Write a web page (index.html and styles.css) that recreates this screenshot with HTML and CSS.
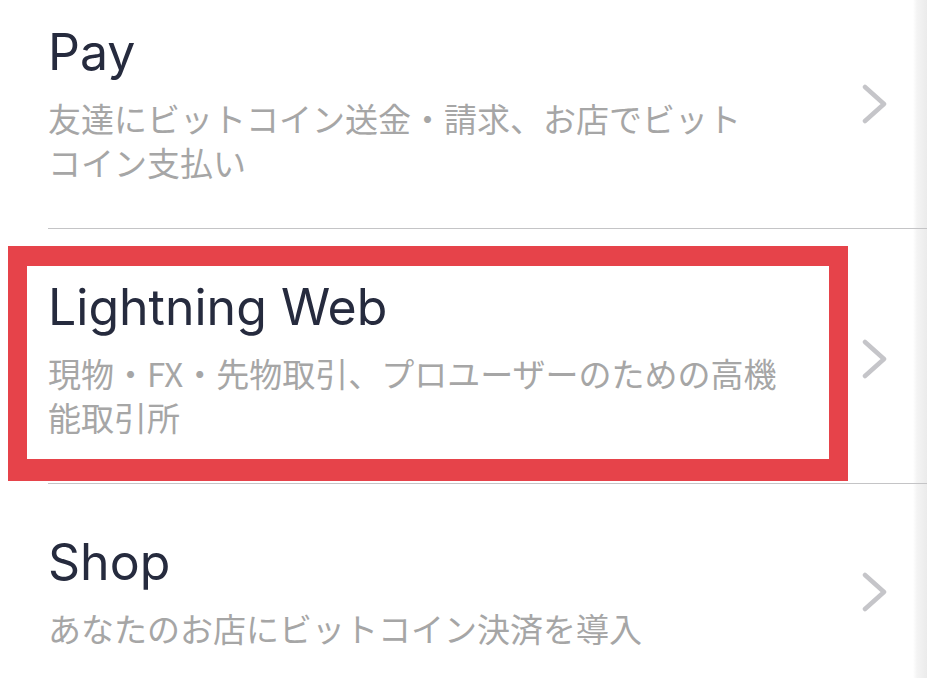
FILE: index.html
```html
<!DOCTYPE html>
<html lang="ja">
<head>
    <meta charset="utf-8">
    <title>bitFlyer サービス</title>
    <link rel="stylesheet" href="styles.css">
</head>
<body>
    <ul class="menu">
        <li class="menu-item">
            <div class="item-text">
                <div class="item-title">Pay</div>
                <div class="item-desc">友達にビットコイン送金・請求、お店でビット<br>コイン支払い</div>
            </div>
            <svg class="chevron" width="28" height="40" viewBox="0 0 28 40">
                <path d="M4 3 L23 20 L4 37" fill="none" stroke="#c5c5c9" stroke-width="4.5" stroke-linecap="round" stroke-linejoin="round"/>
            </svg>
        </li>
        <li class="menu-item">
            <div class="highlight"></div>
            <div class="item-text">
                <div class="item-title">Lightning Web</div>
                <div class="item-desc">現物・FX・先物取引、プロユーザーのための高機能取引所</div>
            </div>
            <svg class="chevron" width="28" height="40" viewBox="0 0 28 40">
                <path d="M4 3 L23 20 L4 37" fill="none" stroke="#c5c5c9" stroke-width="4.5" stroke-linecap="round" stroke-linejoin="round"/>
            </svg>
        </li>
        <li class="menu-item">
            <div class="item-text">
                <div class="item-title">Shop</div>
                <div class="item-desc">あなたのお店にビットコイン決済を導入</div>
            </div>
            <svg class="chevron" width="28" height="40" viewBox="0 0 28 40">
                <path d="M4 3 L23 20 L4 37" fill="none" stroke="#c5c5c9" stroke-width="4.5" stroke-linecap="round" stroke-linejoin="round"/>
            </svg>
        </li>
    </ul>
</body>
</html>
```

FILE: styles.css
```css
html, body {
  margin: 0;
  padding: 0;
  height: 100%;
  overflow: hidden;
}

body {
  font-family: Inter, "Noto Sans CJK JP", sans-serif;
  background: linear-gradient(to right, #fff 0, #fff 913px, #f4f4f4 917px, #ebebeb 927px);
}

.menu {
  list-style: none;
  margin: -26px 0 0 0;
  padding: 0;
}

.menu-item {
  position: relative;
  display: flex;
  align-items: center;
  margin-left: 48px;
  padding: 50px 0 44px;
  border-bottom: 1px solid #c4c4c6;
}

.item-text {
  width: 750px;
}

.item-title {
  font-size: 50px;
  line-height: 56px;
  color: #262b3e;
}

.item-desc {
  margin-top: 16px;
  font-family: "Noto Sans CJK JP", sans-serif;
  font-size: 33px;
  line-height: 44px;
  color: #a6a6a6;
}

.chevron {
  margin-left: auto;
  margin-right: 38px;
}

.highlight {
  position: absolute;
  left: -40px;
  top: 17px;
  width: 840px;
  height: 235px;
  box-sizing: border-box;
  border-style: solid;
  border-color: #e6434a;
  border-width: 20px 19px 22px 19px;
}
```
